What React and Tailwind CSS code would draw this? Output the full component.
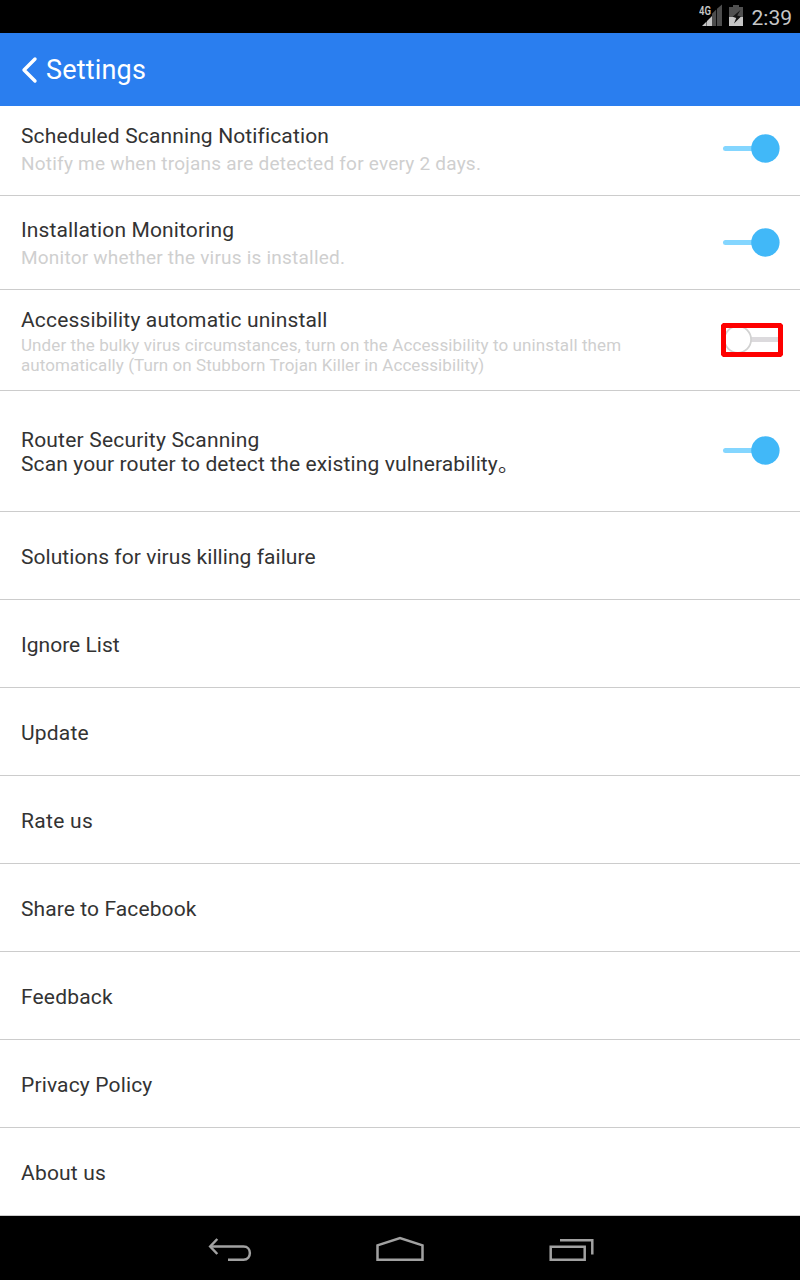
import React from "react";

function Toggle({ on, highlighted }) {
  if (on) {
    return (
      <svg width="60" height="30" viewBox="0 0 60 30" className="shrink-0">
        <rect x="3" y="13" width="40" height="5" rx="2.5" fill="#84d6ff" />
        <circle cx="45.4" cy="15.5" r="14.2" fill="#41b8f8" />
      </svg>
    );
  }
  return (
    <svg width="62" height="34" viewBox="0 0 62 34" className="shrink-0">
      <rect x="28" y="14" width="31" height="5" fill="#dcdadd" />
      <circle cx="16.8" cy="16.5" r="13.3" fill="#fff" stroke="#d2d2d2" strokeWidth="1.8" />
      {highlighted && (
        <path fillRule="evenodd" fill="#fe0000" d="M2 0H60L62 2V32L60 34H2L0 32V2ZM5 5V29H57V5Z" />
      )}
    </svg>
  );
}

function Row({ className, children }) {
  return (
    <div className={`flex items-start justify-between border-b border-[#cccccc] pl-[21px] whitespace-nowrap ${className}`}>
      {children}
    </div>
  );
}

const links = [
  { label: "Solutions for virus killing failure", spacing: "tracking-[0.06px]" },
  { label: "Ignore List", spacing: "tracking-[0.02px]" },
  { label: "Update", spacing: "tracking-[0.2px]" },
  { label: "Rate us", spacing: "tracking-[0.3px]" },
  { label: "Share to Facebook", spacing: "tracking-[0.1px]" },
  { label: "Feedback", spacing: "tracking-[0.17px]" },
  { label: "Privacy Policy", spacing: "tracking-[0.15px]" },
  { label: "About us", spacing: "tracking-[0.2px]" },
];

export default function App() {
  return (
    <div className="flex h-[1280px] w-[800px] flex-col overflow-hidden bg-white font-['Roboto','Noto_Sans_CJK_SC',sans-serif] text-[21px] leading-6 text-[#333333]">
      <div className="flex h-[33px] shrink-0 items-start justify-end bg-black pr-2">
        <svg width="24" height="24" viewBox="0 0 24 24" className="mt-[3px] mr-[6px]">
          <path d="M3 23L7.6 18.4V23Z M8 18L13 13V23H8Z" fill="#c6c6c6" />
          <path d="M13 10.7L17.2 6.5V23H13Z M18 5.8L23 1.5V23H18Z" fill="#4d4d4d" />
          <text x="0" y="12" fontSize="12.5" fontWeight="600" fill="#c6c6c6" stroke="#000" strokeWidth="2" paintOrder="stroke" textLength="12" lengthAdjust="spacingAndGlyphs">4G</text>
        </svg>
        <svg width="14" height="22" viewBox="0 0 14 22" className="mt-[5px] mr-[9px]">
          <path d="M4 0H10V2H14V12H0V2H4Z" fill="#505050" />
          <path d="M0 12H14V21H0Z" fill="#c6c6c6" />
          <path d="M11.5 5L3.6 11.8L7.2 13L5 18.5L12 11.6L8.2 10.4Z" fill="#151515" />
        </svg>
        <span className="mt-[6px] text-[21px] text-[#c6c6c6]">2:39</span>
      </div>
      <header className="flex h-[73px] shrink-0 items-center bg-[#2a7eef] pl-[21px] text-white">
        <svg width="17" height="28" viewBox="0 0 17 28" className="mr-2">
          <path d="M14 3L3 14L14 25" fill="none" stroke="currentColor" strokeWidth="3.4" strokeLinecap="round" strokeLinejoin="round" />
        </svg>
        <h1 className="text-[27px] leading-8 tracking-[0.18px]">Settings</h1>
      </header>
      <main className="flex flex-col">
        <Row className="h-[90px] pt-[18px] pr-5">
          <div>
            <div className="tracking-[0.13px]">Scheduled Scanning Notification</div>
            <div className="mt-1 text-[19px] tracking-[0.22px] text-[#cfcfcf]">Notify me when trojans are detected for every 2 days.</div>
          </div>
          <div className="mt-[9px]"><Toggle on /></div>
        </Row>
        <Row className="h-[94px] pt-[22px] pr-5">
          <div>
            <div className="tracking-[0.13px]">Installation Monitoring</div>
            <div className="mt-1 text-[19px] tracking-[0.22px] text-[#cfcfcf]">Monitor whether the virus is installed.</div>
          </div>
          <div className="mt-[9px]"><Toggle on /></div>
        </Row>
        <Row className="h-[101px] pt-[18px] pr-[17px]">
          <div>
            <div className="tracking-[0.15px]">Accessibility automatic uninstall</div>
            <div className="mt-[3px] text-[17px] leading-5 text-[#cfcfcf]">
              <div className="tracking-[0.1px]">Under the bulky virus circumstances, turn on the Accessibility to uninstall them</div>
              <div className="tracking-[0.07px]">automatically (Turn on Stubborn Trojan Killer in Accessibility)</div>
            </div>
          </div>
          <div className="mt-[15px]"><Toggle highlighted /></div>
        </Row>
        <Row className="h-[121px] pt-[37px] pr-5">
          <div>
            <div className="tracking-[0.2px]">Router Security Scanning</div>
            <div className="tracking-[0.12px]">Scan your router to detect the existing vulnerability。</div>
          </div>
          <div className="mt-[7px]"><Toggle on /></div>
        </Row>
        {links.map((link) => (
          <Row key={link.label} className="h-[88px] pt-[33px]">
            <div className={link.spacing}>{link.label}</div>
          </Row>
        ))}
      </main>
      <nav className="flex h-16 shrink-0 items-start bg-black">
        <svg width="44" height="26" viewBox="0 0 44 26" className="mt-[21px] ml-[208px]" fill="none" stroke="#a1a1a1" strokeWidth="2.5">
          <path d="M9.3 2L2.2 9.5L9.3 17" />
          <path d="M2.5 9.5H35.5C44 9.5 44 22.7 35.5 22.7H20" />
        </svg>
        <svg width="48" height="26" viewBox="0 0 48 26" className="mt-5 ml-[124px]" fill="none" stroke="#a1a1a1" strokeWidth="2.5">
          <path d="M1.5 23.7V9.3L24 2L46.5 9.3V23.7Z" />
        </svg>
        <svg width="46" height="26" viewBox="0 0 46 26" className="mt-5 ml-[125px]" fill="none" stroke="#a1a1a1" strokeWidth="2.5">
          <path d="M1.7 10.7H35.7V23.7H1.7Z M11 4.2H43.3V18.5" />
        </svg>
      </nav>
    </div>
  );
}
